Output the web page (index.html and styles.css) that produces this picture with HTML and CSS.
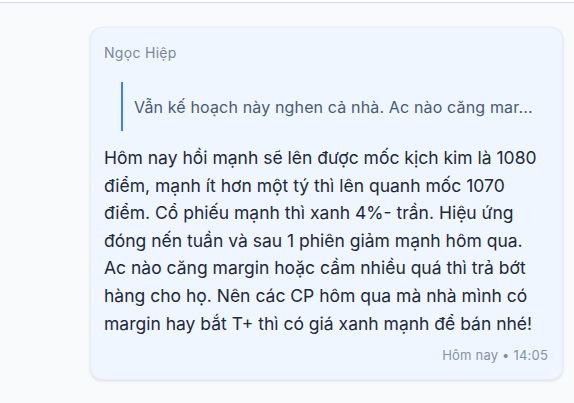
FILE: index.html
```html
<!DOCTYPE html>
<html lang="vi">
<head>
<meta charset="utf-8">
<link rel="stylesheet" href="styles.css">
</head>
<body>
<div class="topline"></div>
<main class="thread">
  <article class="bubble">
    <div class="author">Ngọc Hiệp</div>
    <blockquote class="quote">
      <p>Vẫn kế hoạch này nghen cả nhà. Ac nào căng mar...</p>
    </blockquote>
    <p class="body">Hôm nay hồi mạnh sẽ lên được mốc kịch kim là 1080 điểm, mạnh ít hơn một tý thì lên quanh mốc 1070 điểm. Cổ phiếu mạnh thì xanh 4%- trần. Hiệu ứng đóng nến tuần và sau 1 phiên giảm mạnh hôm qua. Ac nào căng margin hoặc cầm nhiều quá thì trả bớt hàng cho họ. Nên các CP hôm qua mà nhà mình có margin hay bắt T+ thì có giá xanh mạnh để bán nhé!</p>
    <div class="meta">Hôm nay • 14:05</div>
  </article>
</main>
</body>
</html>
```
FILE: styles.css
```css
html, body {
  margin: 0;
  padding: 0;
}
body {
  width: 574px;
  height: 403px;
  overflow: hidden;
  background: #f8fafc;
  font-family: Inter, "Noto Sans", sans-serif;
}
.topline {
  height: 2px;
  background: #ffffff;
  border-bottom: 1px solid #d5dbe3;
}
.thread {
  display: flex;
  justify-content: flex-end;
  padding: 24px 11px 0 0;
}
.bubble {
  width: 473px;
  box-sizing: border-box;
  background: #eff6ff;
  border: 1px solid #e6ecf3;
  border-radius: 12px;
  box-shadow: 0 1px 3px rgba(15, 23, 42, 0.12);
  padding: 15px 14px 15px 13px;
}
.author {
  font-size: 14px;
  line-height: 20px;
  letter-spacing: 0.3px;
  color: #7b8799;
}
.quote {
  margin: 19px 0 13px 17px;
  border-left: 2px solid #3b82f6;
  padding: 0 0 0 11px;
  height: 49px;
  display: flex;
  align-items: center;
}
.quote p {
  margin: 0;
  font-size: 16px;
  letter-spacing: 0.15px;
  color: #4a5a74;
}
.body {
  margin: 0;
  font-size: 17.5px;
  line-height: 27.6px;
  color: #1e293b;
}
.meta {
  text-align: right;
  font-size: 13px;
  line-height: 18px;
  letter-spacing: 0.2px;
  color: #8391a7;
  margin-top: 9px;
}
```
